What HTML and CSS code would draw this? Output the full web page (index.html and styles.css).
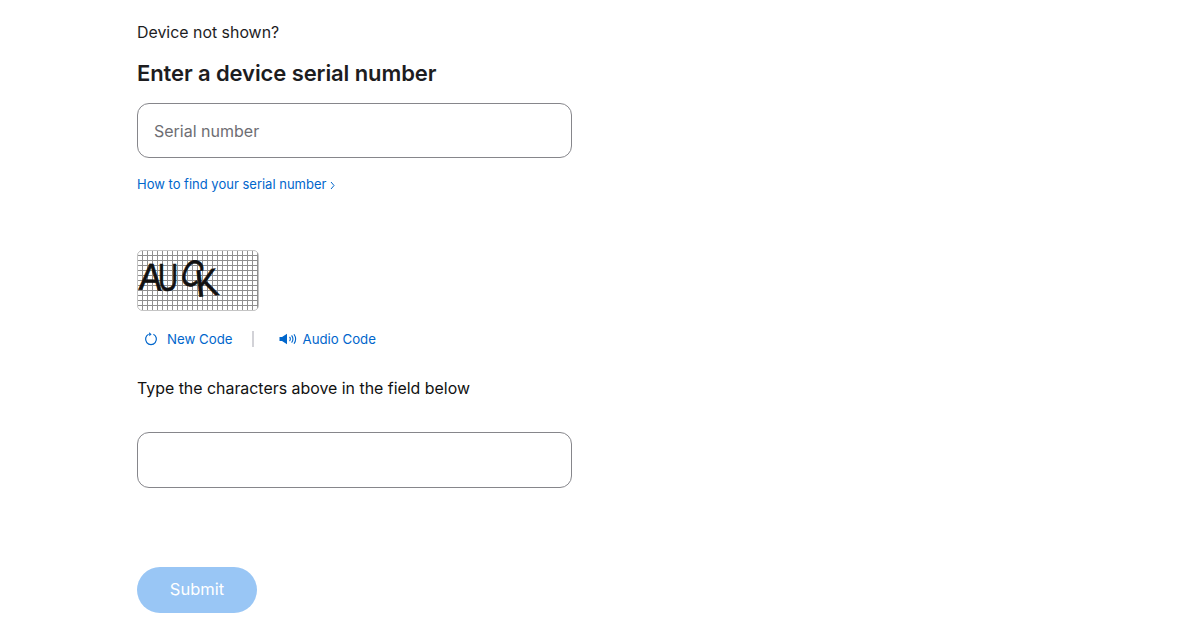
FILE: index.html
```html
<!DOCTYPE html>
<html>
<head>
	<title>Enter a device serial number</title>
	<link rel="stylesheet" href="styles.css">
</head>
<body>
	<div id="form">
		<p class="not-shown">Device not shown?</p>
		<h1>Enter a device serial number</h1>
		<div class="field"><input type="text" placeholder="Serial number"></div>
		<a class="find-link" href="#">How to find your serial number <svg class="chevron" width="5" height="9" viewBox="0 0 5 9"><path d="M1 1l3 3.5L1 8" fill="none" stroke="#0066cc" stroke-width="1"/></svg></a>

		<svg class="captcha" width="122" height="61" viewBox="0 0 122 61">
			<defs>
				<pattern id="grid" width="5" height="5" patternUnits="userSpaceOnUse">
					<path d="M0 0.5H5M0.5 0V5" fill="none" stroke="#8f8f8f" stroke-width="1"/>
				</pattern>
			</defs>
			<rect x="0.5" y="0.5" width="121" height="60" rx="5" fill="url(#grid)" stroke="#c4c4c4"/>
			<g class="captcha-text">
				<text x="2" y="40" transform="rotate(3 12 30)" textLength="23" lengthAdjust="spacingAndGlyphs">A</text>
				<text x="21" y="41" textLength="20" lengthAdjust="spacingAndGlyphs">U</text>
				<text x="44" y="36" transform="rotate(24 54 26)" textLength="20" lengthAdjust="spacingAndGlyphs">C</text>
				<text x="58" y="46" transform="rotate(-6 68 30)" textLength="23" lengthAdjust="spacingAndGlyphs">K</text>
			</g>
		</svg>

		<div class="captcha-links">
			<a href="#">
				<svg width="14" height="14" viewBox="0 0 14 14"><path d="M4.6 2.3A5.4 5.4 0 1 0 9.4 2.3" fill="none" stroke="#0066cc" stroke-width="1.2"/><path d="M5 0.2L7.6 2.2L5.4 4.2Z" fill="#0066cc"/></svg>
				New Code
			</a>
			<span class="divider"></span>
			<a href="#">
				<svg width="18" height="12" viewBox="0 0 18 12"><path d="M0.5 4H3L8 0.8V11.2L3 8H0.5Z" fill="#0066cc"/><path d="M10.5 4A2.8 2.8 0 0 1 10.5 8M12.6 2.4A6 6 0 0 1 12.6 9.6M15 1.2A8.5 8.5 0 0 1 15 10.8" fill="none" stroke="#0066cc" stroke-width="1.1"/></svg>
				Audio Code
			</a>
		</div>

		<p class="type-label">Type the characters above in the field below</p>
		<div class="field"><input type="text"></div>
		<button class="submit" disabled>Submit</button>
	</div>
</body>
</html>
```

FILE: styles.css
```css
body {
	margin: 0;
	background-color: white;
	font-family: Inter, "Liberation Sans", sans-serif;
	color: #1d1d1f;
}

#form {
	width: 435px;
	margin-left: 137px;
	padding-top: 23px;
}

.not-shown {
	margin: 0;
	font-size: 15.9px;
	line-height: 19px;
}

h1 {
	margin: 18px 0 0 0;
	font-size: 22px;
	line-height: 26px;
	font-weight: 600;
	letter-spacing: -0.1px;
}

.field input {
	display: block;
	box-sizing: border-box;
	width: 100%;
	height: 55px;
	padding: 0 16px;
	border: 1px solid #86868b;
	border-radius: 12px;
	font-family: inherit;
	font-size: 16px;
	color: #1d1d1f;
	background: white;
}

h1 + .field {
	margin-top: 17px;
}

.field input::placeholder {
	color: #6e6e73;
	opacity: 1;
}

.find-link {
	display: block;
	margin-top: 18px;
	font-size: 13px;
	line-height: 16px;
	color: #0066cc;
	text-decoration: none;
}

.chevron {
	vertical-align: -1px;
}

.captcha {
	display: block;
	margin-top: 58px;
}

.captcha-text text {
	font-family: "Liberation Sans", sans-serif;
	font-size: 38px;
	fill: #111;
	stroke: #111;
	stroke-width: 0.7px;
}

.captcha-links {
	display: flex;
	align-items: center;
	margin-top: 19px;
	height: 18px;
	padding-left: 7px;
}

.captcha-links a {
	display: flex;
	align-items: center;
	gap: 9px;
	font-size: 13.25px;
	color: #0066cc;
	text-decoration: none;
}

.captcha-links a + .divider + a {
	gap: 6px;
}

.divider {
	width: 2px;
	height: 16px;
	margin: 0 25px 0 19px;
	background-color: #d2d2d7;
}

.type-label {
	margin: 31px 0 0 0;
	font-size: 15.9px;
	line-height: 19px;
	color: #111;
}

.type-label + .field {
	margin-top: 34px;
}

.type-label + .field input {
	height: 56px;
}

.submit {
	display: block;
	width: 120px;
	height: 46px;
	margin-top: 79px;
	padding: 0 0 2px 0;
	border: none;
	border-radius: 23px;
	background-color: #99c6f5;
	color: white;
	font-family: inherit;
	font-size: 16.5px;
}
```
